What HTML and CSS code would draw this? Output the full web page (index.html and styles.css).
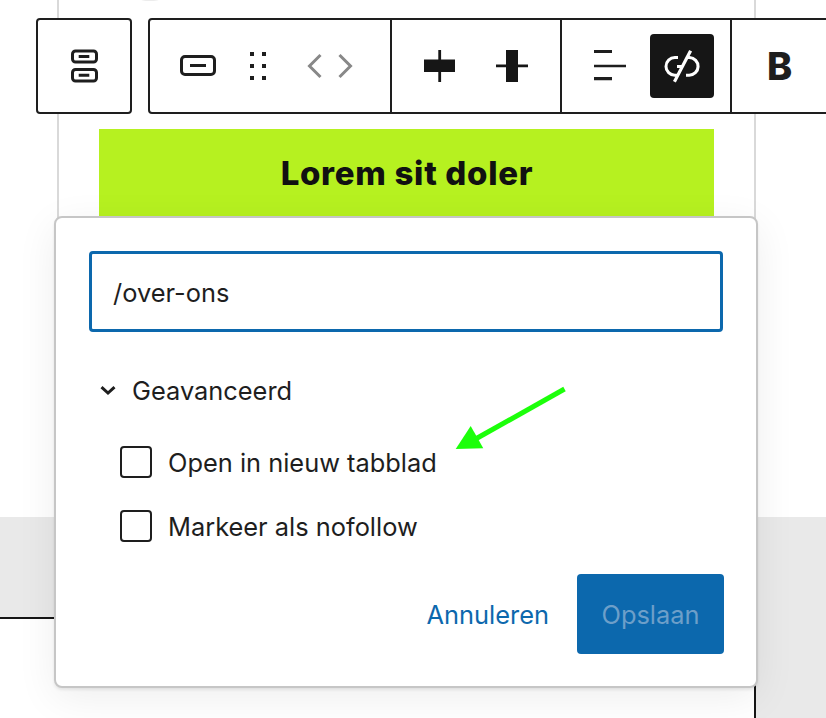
FILE: index.html
```html
<!DOCTYPE html>
<html lang="nl">
<head>
<meta charset="utf-8">
<title>Link bewerken</title>
<link rel="stylesheet" href="styles.css">
</head>
<body>
<div class="page">
  <section class="hero">
    <div class="column">
      <div class="block-button">Lorem sit doler</div>
    </div>
  </section>
  <section class="lower">
    <div class="sheet"></div>
  </section>

  <span class="top-fragment"></span>

  <div class="toolbar">
    <div class="tool-box tool-parent">
      <svg class="icon" viewBox="0 0 48 48" width="48" height="48"><g fill="none" stroke="#1e1e1e" stroke-width="3"><rect x="12.5" y="9" width="24" height="11" rx="3"/><rect x="12.5" y="27.5" width="24" height="11.5" rx="3"/></g><path d="M18.7 14.5h10.6M18.7 33.2h10.6" stroke="#1e1e1e" stroke-width="3"/></svg>
    </div>
    <div class="tool-box tool-main">
      <div class="group group-a">
        <svg class="icon" viewBox="0 0 48 48" width="48" height="48"><rect x="7.5" y="14.5" width="33" height="18" rx="3.5" fill="none" stroke="#1e1e1e" stroke-width="3"/><path d="M16 23.5h16" stroke="#1e1e1e" stroke-width="3"/></svg>
        <svg class="icon" viewBox="0 0 48 48" width="48" height="48"><path fill="#1e1e1e" d="M16 10h4v4h-4zM28 10h4v4h-4zM16 22h4v4h-4zM28 22h4v4h-4zM16 34h4v4h-4zM28 34h4v4h-4z"/></svg>
        <svg class="icon icon-mover" viewBox="0 0 48 48" width="48" height="48"><path d="M14.5 13 3.5 24l11 11M33.5 13l11 11-11 11" fill="none" stroke="#888" stroke-width="3"/></svg>
      </div>
      <div class="group group-b">
        <svg class="icon" viewBox="0 0 48 48" width="48" height="48"><path fill="#161616" d="M8 17.5h31v12.5H8zM22.3 8h2.8v32h-2.8z"/></svg>
        <svg class="icon" viewBox="0 0 48 48" width="48" height="48"><path fill="#161616" d="M18 8h12v32H18zM8 22.5h32v2.8H8z"/></svg>
      </div>
      <div class="group group-c">
        <svg class="icon" viewBox="0 0 48 48" width="48" height="48"><path fill="#1e1e1e" d="M8 8h18v3H8zM8 22.7h32v2.6H8zM8 35h18v3.2H8z"/></svg>
        <div class="active-btn">
          <svg class="icon" viewBox="0 0 24 24" width="48" height="48"><path fill="#fff" d="M17.031 4.703 15.576 4l-1.56 3H14v.03l-2.324 4.47H9.5V13h1.396l-1.502 2.889h-.95a3.694 3.694 0 0 1 0-7.389H10V7H8.444a5.194 5.194 0 1 0 0 10.389h.17L7.5 19.53l1.416.719L15.049 8.5h.507a3.694 3.694 0 0 1 0 7.39H14v1.5h1.556a5.194 5.194 0 0 0 .273-10.383l1.202-2.304Z"/></svg>
        </div>
      </div>
      <div class="group group-d"><span class="bold-glyph">B</span></div>
    </div>
  </div>

  <div class="popover">
    <div class="url-field">/over-ons</div>
    <div class="advanced">
      <svg class="chevron" viewBox="0 0 16 9" width="16" height="9"><path d="M1.5 1.2 8 7l6.5-5.8" fill="none" stroke="#1e1e1e" stroke-width="3"/></svg>
      <span>Geavanceerd</span>
    </div>
    <div class="options">
      <div class="option"><span class="box"></span><span>Open in nieuw tabblad</span></div>
      <div class="option"><span class="box"></span><span>Markeer als nofollow</span></div>
    </div>
    <div class="actions">
      <span class="cancel">Annuleren</span>
      <span class="save">Opslaan</span>
    </div>
  </div>

  <svg class="arrow" viewBox="0 0 120 70" width="120" height="70"><path d="M109.5 3 17 55" stroke="#1cff0a" stroke-width="5" fill="none"/><path fill="#1cff0a" d="M.7 63 15.7 40 28.3 62.3z"/></svg>
</div>
</body>
</html>
```
FILE: styles.css
```css
* { box-sizing: border-box; }
html, body { margin: 0; padding: 0; overflow: hidden; background: #fff; }
.page {
  position: relative;
  width: 826px;
  height: 718px;
  overflow: hidden;
  font-family: Inter, "Liberation Sans", sans-serif;
  color: #1e1e1e;
}

/* canvas */
.hero { height: 517px; background: #fff; padding-left: 57px; }
.column {
  width: 699px;
  height: 100%;
  border-left: 2px solid #d9d9d9;
  border-right: 2px solid #d9d9d9;
  padding: 129px 40px 0;
}
.block-button {
  width: 615px;
  height: 88px;
  padding: 1px 0 0 1px;
  background: #b6f120;
  color: #111;
  display: flex;
  align-items: center;
  justify-content: center;
  font-weight: 800;
  font-size: 33px;
  letter-spacing: .7px;
  line-height: 1;
}
.lower { height: 201px; background: #e9e9e9; padding-top: 100px; }
.sheet {
  width: 756px;
  height: 101px;
  background: #fff;
  border-top: 2px solid #161616;
  border-right: 2px solid #161616;
}
.top-fragment {
  position: absolute;
  left: 140px;
  top: -3px;
  width: 20px;
  height: 4px;
  border-radius: 50%;
  background: #ececec;
}

/* toolbar */
.toolbar {
  position: absolute;
  left: 36px;
  top: 18px;
  display: flex;
  gap: 16px;
}
.tool-box {
  height: 96px;
  background: #fff;
  border: 2px solid #1e1e1e;
  border-radius: 4px;
  display: flex;
  align-items: center;
}
.tool-parent { width: 96px; justify-content: center; }
.tool-main { width: 760px; align-items: stretch; }
.group { display: flex; align-items: center; border-right: 2px solid #1e1e1e; }
.icon { display: block; flex: none; }
.group-a { width: 242px; padding-left: 24px; gap: 12px; }
.icon-mover { margin-left: 12px; }
.group-b { width: 170px; padding-left: 24px; gap: 24px; }
.group-c { width: 170px; padding-left: 24px; gap: 16px; }
.group-d { border-right: 0; padding-left: 35px; }
.active-btn {
  width: 64px;
  height: 64px;
  background: #161616;
  border-radius: 4px;
  display: flex;
  align-items: center;
  justify-content: center;
}
.bold-glyph { font-size: 38px; font-weight: 800; line-height: 1; }

/* popover */
.popover {
  position: absolute;
  left: 54px;
  top: 216px;
  width: 704px;
  height: 472px;
  padding: 33px 33px 32px 33px;
  background: #fff;
  border: 2px solid #c6c6c6;
  border-radius: 8px;
  box-shadow: 0 2px 3px rgba(0,0,0,.08), 0 10px 40px rgba(0,0,0,.07);
  font-size: 25.4px;
}
.url-field {
  height: 81px;
  border: 3px solid #0c68ad;
  border-radius: 4px;
  padding: 3px 0 0 21px;
  display: flex;
  align-items: center;
  line-height: 1;
}
.advanced {
  height: 40px;
  margin-top: 38px;
  display: flex;
  align-items: center;
  padding-left: 11px;
  gap: 16px;
}
.chevron { display: block; }
.options { margin-top: 36px; padding-left: 31px; display: flex; flex-direction: column; gap: 32px; }
.option { display: flex; align-items: center; gap: 16px; height: 32px; }
.box {
  width: 32px;
  height: 32px;
  border: 2px solid #1e1e1e;
  border-radius: 4px;
  flex: none;
}
.actions {
  margin-top: 32px;
  margin-right: -1px;
  display: flex;
  justify-content: flex-end;
  align-items: center;
  gap: 28px;
}
.cancel { color: #0c68ad; }
.save {
  width: 147px;
  height: 80px;
  background: #0c68ad;
  border-radius: 4px;
  color: #6d9fc9;
  display: flex;
  align-items: center;
  justify-content: center;
}

/* annotation */
.arrow { position: absolute; left: 455px; top: 386px; }
```
